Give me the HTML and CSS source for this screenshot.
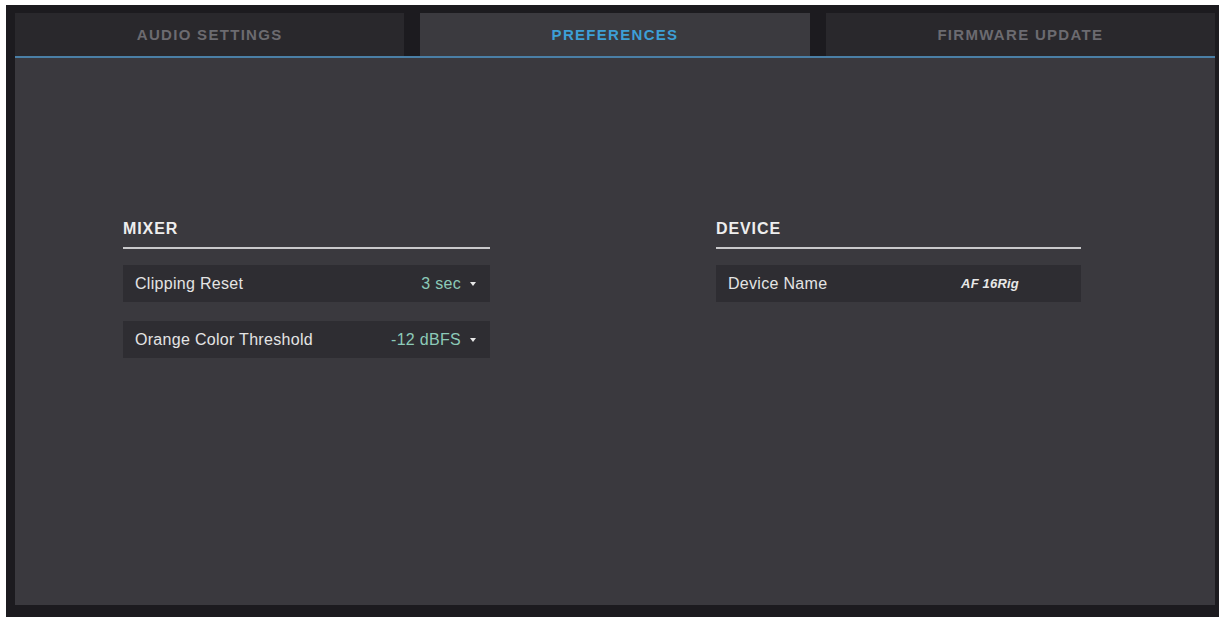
FILE: index.html
```html
<!DOCTYPE html>
<html>
	<head>
		<title>Preferences</title>
		<link rel="stylesheet" href="styles.css">
	</head>
<body>
	<div class="frame">
		<!-- tab strip -->
		<div class="tabs">
			<div class="tab">Audio Settings</div>
			<div class="tab active">Preferences</div>
			<div class="tab">Firmware Update</div>
		</div>

		<div class="panel">
			<div class="group mixer">
				<h3 class="group-title">Mixer</h3>
				<div class="row">
					<span class="label">Clipping Reset</span>
					<span class="value">3 sec <span class="caret"></span></span>
				</div>
				<div class="row">
					<span class="label">Orange Color Threshold</span>
					<span class="value">-12 dBFS <span class="caret"></span></span>
				</div>
			</div>

			<div class="group device">
				<h3 class="group-title">Device</h3>
				<div class="row">
					<span class="label">Device Name</span>
					<span class="name">AF 16Rig</span>
				</div>
			</div>
		</div>
	</div>
</body>
</html>
```

FILE: styles.css
```css
body {
	margin: 0px;
	padding: 5px 4px 3px 6px;
	background-color: #fff;
	font-family: 'Liberation Sans', Arial, sans-serif;
}
.frame {
	background-color: #1c1b1f;
	padding: 8px 4px 12px 9px;
	height: 612px;
	box-sizing: border-box;
	display: flex;
	flex-direction: column;
}
.tabs {
	display: grid;
	grid-template-columns: 1fr 1fr 1fr;
	column-gap: 16px;
	height: 43px;
	border-bottom: 2px solid #4a7fa6;
}
.tab {
	background-color: #29282c;
	color: #6c6b70;
	font-size: 15px;
	font-weight: bold;
	text-transform: uppercase;
	letter-spacing: 1.3px;
	display: flex;
	align-items: center;
	justify-content: center;
	padding-bottom: 1px;
}
.tab.active {
	background-color: #3b3a3f;
	color: #3d9fd6;
}
.panel {
	flex: 1;
	background-color: #3a393e;
	padding: 160px 0 0 108px;
	display: flex;
	gap: 226px;
}
.group {
	width: 367px;
}
.device {
	width: 365px;
}
.group-title {
	margin: 0 0 16px 0;
	padding: 1px 0 9px 0;
	font-size: 16px;
	line-height: 19px;
	letter-spacing: 0.9px;
	color: #eeeeee;
	text-transform: uppercase;
	border-bottom: 2px solid #c9c9cb;
}
.row {
	height: 37px;
	background-color: #2e2d32;
	margin-bottom: 19px;
	display: flex;
	align-items: center;
	justify-content: space-between;
	padding: 0 14px 0 12px;
	font-size: 16px;
	letter-spacing: 0.3px;
	color: #e4e4e4;
}
.value {
	color: #8ccab8;
	display: flex;
	align-items: center;
}
.caret {
	display: inline-block;
	width: 0;
	height: 0;
	margin-left: 9px;
	border-left: 3px solid transparent;
	border-right: 3px solid transparent;
	border-top: 4px solid #e8e8e8;
}
.name {
	font-size: 13px;
	font-weight: bold;
	font-style: italic;
	letter-spacing: 0.2px;
	color: #e8e8e8;
	margin-right: 48px;
}
```
